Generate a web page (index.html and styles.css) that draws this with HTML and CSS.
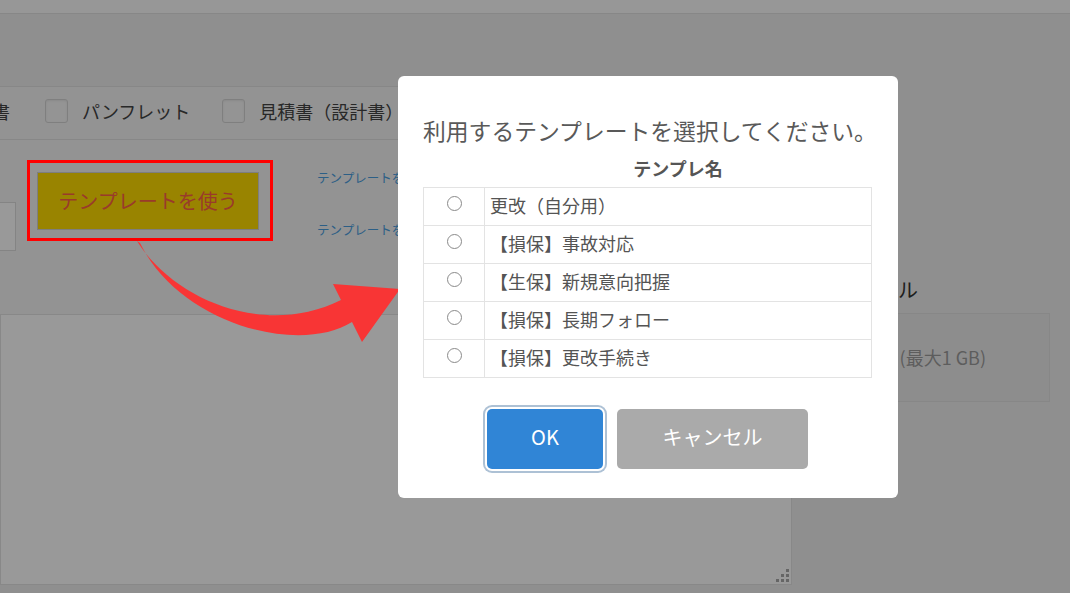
FILE: index.html
```html
<!DOCTYPE html>
<html lang="ja">
<head>
<meta charset="utf-8">
<title>テンプレート選択</title>
<link rel="stylesheet" href="styles.css">
</head>
<body>
<div class="page">
  <div class="topbar"></div>
  <div class="header"></div>
  <div class="main">
    <div class="left">
      <div class="checks">
        <span class="check-first">報告書</span>
        <label class="check"><span class="box"></span><span>パンフレット</span></label>
        <label class="check"><span class="box"></span><span>見積書（設計書）</span></label>
      </div>
      <div class="actions">
        <div class="input-stub"></div>
        <div class="btn-wrap">
          <button class="use-btn">テンプレートを使う</button>
          <span class="annot"></span>
        </div>
        <div class="links">
          <a class="link">テンプレートを保存する</a>
          <a class="link">テンプレートを管理する</a>
        </div>
      </div>
      <div class="textarea">
        <svg class="grip" width="14" height="14" viewBox="0 0 14 14"><rect x="10" y="0" width="3" height="3"/><rect x="5" y="5" width="3" height="3"/><rect x="10" y="5" width="3" height="3"/><rect x="0" y="10" width="3" height="3"/><rect x="5" y="10" width="3" height="3"/><rect x="10" y="10" width="3" height="3"/></svg>
      </div>
    </div>
    <div class="right">
      <div class="file-label">添付ファイル</div>
      <div class="dropzone">ファイル (最大1 GB)</div>
    </div>
  </div>
</div>

<div class="overlay"></div>

<svg class="arrow" width="1070" height="593" viewBox="0 0 1070 593">
  <path d="M137,241 C170,295 260,340 341,300 L333,284 L400,289 L362,342 L352,322 C300,355 180,325 140,243 Z" fill="#f83535"/>
</svg>

<div class="modal">
  <h2 class="modal-title">利用するテンプレートを選択してください。</h2>
  <table class="tpl-table">
    <thead>
      <tr><th class="col-radio"></th><th>テンプレ名</th></tr>
    </thead>
    <tbody>
      <tr><td class="radio-cell"><input type="radio" name="tpl"></td><td>更改（自分用）</td></tr>
      <tr><td class="radio-cell"><input type="radio" name="tpl"></td><td>【損保】事故対応</td></tr>
      <tr><td class="radio-cell"><input type="radio" name="tpl"></td><td>【生保】新規意向把握</td></tr>
      <tr><td class="radio-cell"><input type="radio" name="tpl"></td><td>【損保】長期フォロー</td></tr>
      <tr><td class="radio-cell"><input type="radio" name="tpl"></td><td>【損保】更改手続き</td></tr>
    </tbody>
  </table>
  <div class="modal-actions">
    <button class="btn btn-ok">OK</button>
    <button class="btn btn-cancel">キャンセル</button>
  </div>
</div>
</body>
</html>
```
FILE: styles.css
```css
* { box-sizing: border-box; }
html, body { margin: 0; padding: 0; }
body {
  width: 1070px;
  height: 593px;
  overflow: hidden;
  position: relative;
  background: #eeeeee;
  font-family: "Noto Sans CJK JP", "Noto Sans", sans-serif;
  color: #444;
}

.topbar { height: 14px; background: #fcfcfc; border-bottom: 1px solid #e2e2e2; }
.header { height: 72px; }

.main { display: flex; }
.left { width: 792px; flex: none; overflow: hidden; }

.checks {
  height: 54px;
  border-top: 1px solid #e2e2e2;
  border-bottom: 1px solid #e2e2e2;
  background: #f5f5f5;
  display: flex;
  align-items: center;
  padding-bottom: 4px;
  font-size: 18px;
  line-height: 24px;
  color: #444;
  white-space: nowrap;
}
.check-first { margin-left: -44px; margin-right: 35px; }
.check { display: flex; align-items: center; margin-right: 32px; }
.box {
  width: 23px; height: 24px;
  border: 1px solid #d4d4d4;
  border-radius: 3px;
  background: #f7f7f7;
  box-shadow: inset 0 1px 2px rgba(0,0,0,.08);
  margin-right: 14px;
}

.actions {
  height: 174px;
  background: #f5f5f5;
  display: flex;
  align-items: flex-start;
}
.input-stub {
  width: 50px; height: 49px;
  margin-left: -34px;
  margin-top: 62px;
  background: #fff;
  border: 1px solid #dcdcdc;
}
.btn-wrap { position: relative; margin-left: 21px; margin-top: 32px; }
.use-btn {
  display: block;
  width: 222px; height: 58px;
  background: #ffdd00;
  border: 1px solid #d2d2d2;
  color: #ff6347;
  font-family: inherit;
  font-size: 20px;
  padding: 0 0 2px;
}
.annot {
  position: absolute;
  left: -10px; top: -12px;
  width: 246px; height: 81px;
  border: 3px solid #ff0000;
  z-index: 20;
}
.links {
  margin-left: 58px;
  margin-top: 28px;
  display: flex;
  flex-direction: column;
  gap: 32px;
  font-size: 12.5px;
  line-height: 20px;
  white-space: nowrap;
}
.link { color: #4a9ee0; }

.textarea {
  position: relative;
  height: 271px;
  background: #fff;
  border: 1px solid #e3e3e3;
}
.grip { position: absolute; right: 1px; bottom: 1px; fill: #a8a8a8; }

.right { flex: 1; padding: 189px 20px 0 6px; }
.file-label { font-size: 20px; line-height: 30px; color: #333; white-space: nowrap; }
.dropzone {
  margin-top: 8px;
  height: 89px;
  border: 1px solid #e2e2e2;
  background: #ececec;
  text-align: right;
  padding-right: 63px;
  font-size: 18px;
  line-height: 87px;
  color: #9c9c9c;
  white-space: nowrap;
}

.overlay {
  position: absolute;
  inset: 0;
  background: rgba(0,0,0,.4);
  z-index: 10;
}
.arrow { position: absolute; left: 0; top: 0; z-index: 20; }

.modal {
  position: absolute;
  left: 398px; top: 76px;
  width: 500px; height: 422px;
  background: #fff;
  border-radius: 6px;
  padding: 38px 26px 0 25px;
  z-index: 30;
}
.modal-title {
  margin: 0;
  font-size: 22.8px;
  line-height: 33px;
  font-weight: normal;
  color: #595959;
  white-space: nowrap;
}
.tpl-table {
  margin-top: 10px;
  width: 449px;
  border-collapse: collapse;
  font-size: 18px;
  color: #545454;
}
.tpl-table th {
  height: 30px;
  padding: 0 0 8px;
  line-height: 22px;
  font-weight: bold;
  text-align: center;
  color: #555;
}
.col-radio { width: 61px; }
.tpl-table td {
  border: 1px solid #e3e3e3;
  padding: 4px 5px 6px;
  line-height: 27px;
  vertical-align: top;
}
.radio-cell input {
  appearance: none;
  -webkit-appearance: none;
  display: block;
  width: 15px; height: 15px;
  margin: 4px auto 0;
  border: 1px solid #8a8a8a;
  border-radius: 50%;
  background: #fff;
}

.modal-actions {
  margin-top: 31px;
  display: flex;
  justify-content: center;
  gap: 14px;
}
.btn {
  height: 60px;
  border: none;
  border-radius: 5px;
  color: #fff;
  font-family: inherit;
  font-size: 20px;
  padding: 0 0 5px;
}
.btn-ok {
  width: 116px;
  background: #3085d6;
  box-shadow: 0 0 0 2px #fff, 0 0 0 4px rgba(50,100,150,.4);
}
.btn-cancel { width: 191px; background: #aaaaaa; }
```
